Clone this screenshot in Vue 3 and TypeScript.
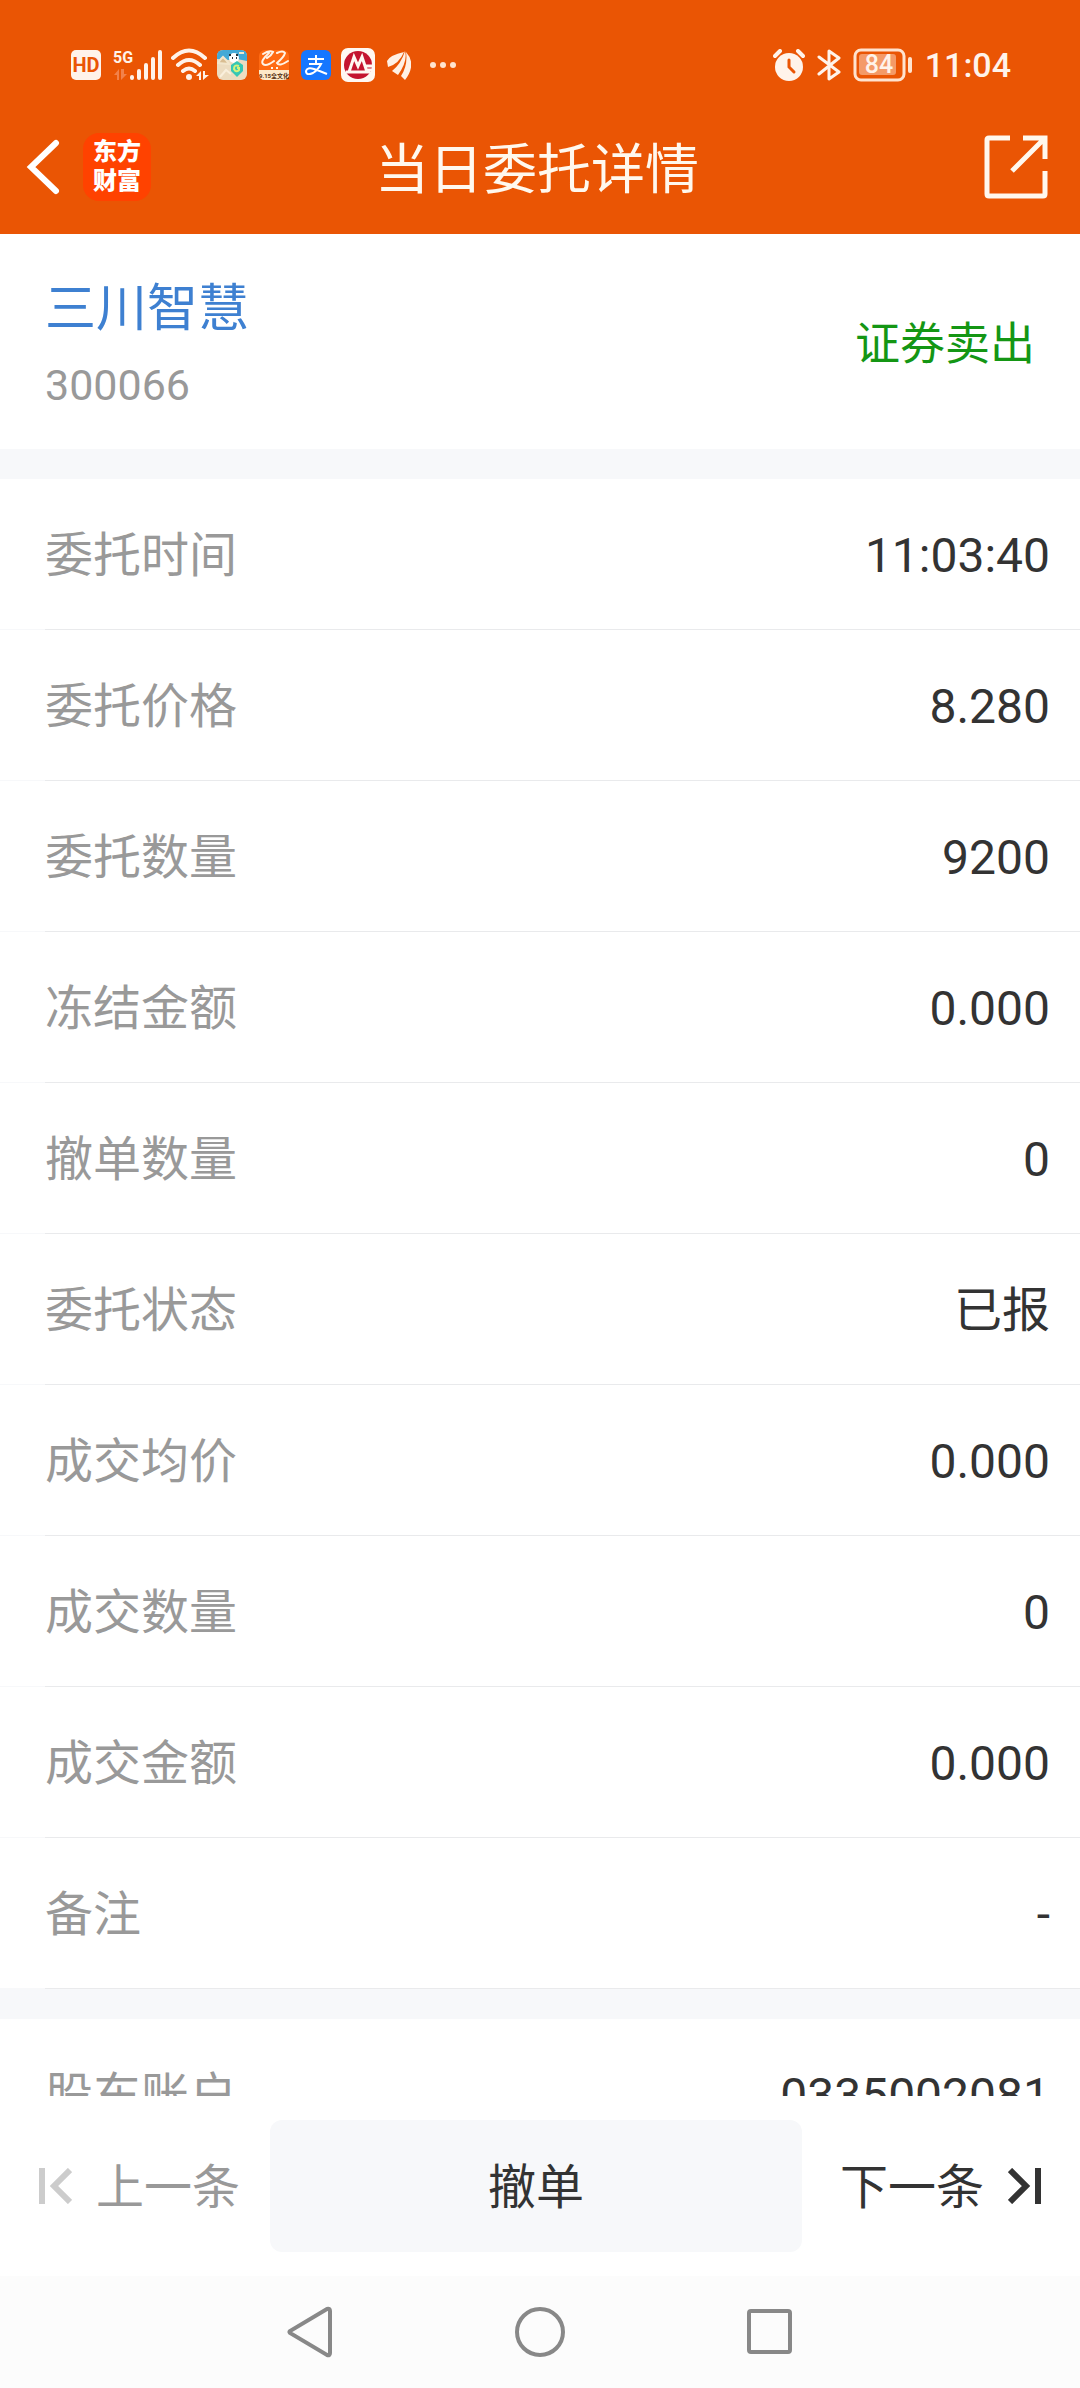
<script setup lang="ts">
interface Field {
  label: string
  value: string
}

const orderFields: Field[] = [
  { label: '委托时间', value: '11:03:40' },
  { label: '委托价格', value: '8.280' },
  { label: '委托数量', value: '9200' },
  { label: '冻结金额', value: '0.000' },
  { label: '撤单数量', value: '0' },
  { label: '委托状态', value: '已报' },
  { label: '成交均价', value: '0.000' },
  { label: '成交数量', value: '0' },
  { label: '成交金额', value: '0.000' },
  { label: '备注', value: '-' },
]

const accountFields: Field[] = [{ label: '股东账户', value: '0335002081' }]
</script>

<template>
  <div class="page">
    <header class="top">
      <div class="status">
        <div class="status-left">
          <svg width="30" height="30" viewBox="0 0 30 30">
            <rect width="30" height="30" rx="5" fill="#fff3ea" />
            <text x="15" y="22" text-anchor="middle" class="hd">HD</text>
          </svg>
          <svg class="signal" width="50" height="34" viewBox="0 0 50 34">
            <text x="0" y="15" class="net">5G</text>
            <path d="M1 27L6 21V32H4V27ZM8 21V32L14 26H11V21Z" fill="#f2814a" />
            <g stroke="#fff3ea" stroke-width="4" stroke-linecap="round">
              <path d="M19 29V30M26 23V30M33 17V30M40 11V30M47 4V30" />
            </g>
          </svg>
          <svg class="wifi" width="38" height="34" viewBox="0 0 38 34">
            <g fill="none" stroke="#fff3ea" stroke-width="4" stroke-linecap="round">
              <path d="M2 10Q18 -5 34 10M7 17Q18 7 29 17M12 23Q18 18 24 23" />
            </g>
            <circle cx="18" cy="29" r="3" fill="#fff3ea" />
            <path d="M25 28L30 23V32H28V28ZM32 23V32L38 27H34V23Z" fill="#fff3ea" />
          </svg>
          <svg width="30" height="30" viewBox="0 0 30 30">
            <rect width="30" height="30" rx="6" fill="#ecdcc0" />
            <path d="M0 9V6Q0 0 6 0H24Q30 0 30 6V11L20 9L12 10Z" fill="#43a9d6" />
            <path d="M1 13L4 9L6 7L9 10L12 14ZM22 3H27" stroke="#f2e6cc" stroke-width="2" fill="#d9bd91" />
            <circle cx="17" cy="8" r="5" fill="#fff" />
            <path d="M13 4V6M20 4V6M15 8H16M19 8H20" stroke="#28343c" stroke-width="2" />
            <path d="M20 11L26 15V21L20 27L14 21V15Z" fill="#35c7b4" />
            <path d="M22 16Q17 14 17 19Q19 23 22 20V18H20" fill="none" stroke="#d3f27c" stroke-width="2" />
            <path d="M3 27L9 20L14 24" fill="none" stroke="#f9efdc" stroke-width="2" />
          </svg>
          <svg width="30" height="30" viewBox="0 0 30 30">
            <rect width="30" height="30" rx="6" fill="#ff6a13" />
            <path d="M0 20H30V24Q30 30 24 30H6Q0 30 0 24Z" fill="#fde9c8" />
            <path d="M4 4Q10 0 14 2Q12 6 8 8M10 3Q1 11 4 14Q7 17 15 11M18 3Q24 0 26 3Q25 7 18 13Q20 17 29 11" fill="none" stroke="#fff3e6" stroke-width="2" stroke-linecap="round" />
            <path d="M12 18H14M17 18H19" stroke="#fff3e6" stroke-width="2" />
            <text x="15" y="28" text-anchor="middle" class="tiny">9.15全文化</text>
          </svg>
          <svg width="30" height="30" viewBox="0 0 30 30">
            <rect width="30" height="30" rx="6" fill="#1677ff" />
            <path d="M7 9H23M15 5V14M8 14H20Q17 20 12 23Q5 26 5 21Q6 17 13 19Q19 21 26 24" fill="none" stroke="#fff" stroke-width="2" />
          </svg>
          <svg class="bank" width="34" height="34" viewBox="0 0 34 34">
            <rect width="34" height="34" rx="7" fill="#fff8f2" />
            <circle cx="17" cy="17" r="14" fill="#c4142f" />
            <path d="M8 24L13 9L17 18L21 9L26 24M5 24H29M25 18H32M25 22H31" fill="none" stroke="#fff8f2" stroke-width="3" />
          </svg>
          <svg class="wing" width="24" height="30" viewBox="0 0 24 30">
            <path d="M0 11Q3 5 17 2Q12 14 1 17ZM5 21Q14 14 18 1Q21 11 11 25ZM14 26Q21 15 19 2Q30 14 18 30Z" fill="#fff0e4" />
          </svg>
          <svg class="more" width="26" height="6" viewBox="0 0 26 6">
            <g fill="#ffe3cf"><circle cx="3" cy="3" r="3" /><circle cx="13" cy="3" r="3" /><circle cx="23" cy="3" r="3" /></g>
          </svg>
        </div>
        <div class="status-right">
          <svg width="32" height="32" viewBox="0 0 32 32">
            <circle cx="16" cy="18" r="14" fill="#fff3ea" />
            <path d="M2 7L7 2M25 2L30 7" stroke="#fff3ea" stroke-width="4" stroke-linecap="round" />
            <path d="M16 11V18L21 23" fill="none" stroke="#ea5504" stroke-width="3" stroke-linecap="round" />
          </svg>
          <svg width="24" height="32" viewBox="0 0 24 32">
            <path d="M2 8L22 23L12 30V2L22 9L2 25" fill="none" stroke="#fff3ea" stroke-width="3" stroke-linecap="round" stroke-linejoin="round" />
          </svg>
          <svg width="60" height="34" viewBox="0 0 60 34">
            <rect x="2" y="2" width="49" height="30" rx="6" fill="none" stroke="#ffe3cf" stroke-width="3" />
            <rect x="6" y="6" width="37" height="21" rx="3" fill="#f49a68" />
            <path d="M57 11V23" stroke="#ffe3cf" stroke-width="4" stroke-linecap="round" />
            <text x="26" y="25" text-anchor="middle" class="charge">84</text>
          </svg>
          <time class="clock">11:04</time>
        </div>
      </div>

      <div class="title-bar">
        <div class="title-left">
          <button class="icon-button" type="button" aria-label="返回">
            <svg width="34" height="56" viewBox="0 0 34 56">
              <path d="M30 4L5 28L30 52" fill="none" stroke="#fff" stroke-width="6" stroke-linecap="round" />
            </svg>
          </button>
          <span class="brand">东方<br>财富</span>
        </div>
        <h1>当日委托详情</h1>
        <button class="icon-button share" type="button" aria-label="分享">
          <svg width="64" height="64" viewBox="0 0 64 64">
            <path d="M26 3H5Q3 3 3 5V59Q3 61 5 61H59Q61 61 61 59V36M39 3H61V24M61 3L28 36" fill="none" stroke="#fff8ee" stroke-width="5" />
          </svg>
        </button>
      </div>
    </header>

    <main class="content">
      <section class="summary">
        <div>
          <a class="stock" href="#">三川智慧</a>
          <div class="code">300066</div>
        </div>
        <div class="side">证券卖出</div>
      </section>

      <dl class="fields">
        <div v-for="field in orderFields" :key="field.label" class="row">
          <dt>{{ field.label }}</dt>
          <dd>{{ field.value }}</dd>
        </div>
      </dl>

      <dl class="fields">
        <div v-for="field in accountFields" :key="field.label" class="row">
          <dt>{{ field.label }}</dt>
          <dd>{{ field.value }}</dd>
        </div>
      </dl>
    </main>

    <footer class="actions">
      <button class="step previous" type="button">
        <svg width="33" height="36" viewBox="0 0 33 36">
          <path d="M3 0V36M31 2L15 18L31 34" fill="none" stroke="#ccc" stroke-width="6" />
        </svg>
        <span class="caption">上一条</span>
      </button>
      <button class="cancel" type="button"><span class="caption">撤单</span></button>
      <button class="step next" type="button">
        <span class="caption">下一条</span>
        <svg width="33" height="36" viewBox="0 0 33 36">
          <path d="M30 0V36M2 2L18 18L2 34" fill="none" stroke="#333" stroke-width="6" />
        </svg>
      </button>
    </footer>

    <nav class="system">
      <button type="button" aria-label="后退">
        <svg width="50" height="52" viewBox="0 0 50 52">
          <path d="M42 3L5 25Q4 26 5 27L42 49Q45 50 45 47V5Q45 2 42 3Z" fill="none" stroke="#888" stroke-width="4" />
        </svg>
      </button>
      <button type="button" aria-label="主页">
        <svg width="50" height="50" viewBox="0 0 50 50">
          <circle cx="25" cy="25" r="23" fill="none" stroke="#888" stroke-width="4" />
        </svg>
      </button>
      <button type="button" aria-label="最近任务">
        <svg width="46" height="46" viewBox="0 0 46 46">
          <rect x="2" y="2" width="41" height="41" rx="2" fill="none" stroke="#888" stroke-width="4" />
        </svg>
      </button>
    </nav>
  </div>
</template>

<style>
body {
  margin: 0;
}
</style>

<style scoped>
.page {
  display: flex;
  flex-direction: column;
  height: 100vh;
  background: #fff;
  color: #333;
  font-family: Roboto, "Noto Sans CJK SC", sans-serif;
  font-size: 48px;
  line-height: 72px;
}

svg {
  display: block;
  flex: none;
}

button {
  padding: 0;
  border: 0;
  background: none;
  color: inherit;
  font: inherit;
}

.top {
  flex: none;
  background: #ea5504;
  color: #fff8ee;
}

.status {
  display: flex;
  align-items: center;
  justify-content: space-between;
  height: 74px;
  padding: 28px 69px 0 71px;
}

.status-left,
.status-right {
  display: flex;
  align-items: center;
  gap: 12px;
}

.signal,
.wifi {
  margin-right: -4px;
}

.bank {
  margin-left: -2px;
}

.more {
  margin-left: 7px;
}

.hd {
  fill: #ea5504;
  font-size: 20px;
  font-weight: 700;
}

.net {
  fill: #fff3ea;
  font-size: 16px;
  font-weight: 700;
}

.tiny {
  fill: #5a3213;
  font-size: 6px;
  font-weight: 700;
}

.charge {
  fill: #fff3ea;
  font-size: 25px;
  font-weight: 500;
}

.clock {
  color: #fff3ea;
  font-size: 34px;
  font-weight: 500;
  line-height: 40px;
}

.title-bar {
  display: grid;
  grid-template-columns: 1fr auto 1fr;
  align-items: center;
  height: 130px;
  padding: 0 32px 2px 26px;
}

.title-left {
  display: flex;
  align-items: center;
  gap: 23px;
}

.share {
  justify-self: end;
}

.brand {
  width: 68px;
  box-sizing: border-box;
  padding: 5px 0;
  border-radius: 16px;
  background: #ff4200;
  color: #fff;
  font-size: 24px;
  font-weight: 900;
  line-height: 29px;
  text-align: center;
}

h1 {
  margin: 0;
  padding-top: 8px;
  font-size: 54px;
  font-weight: 400;
  line-height: 80px;
}

.content {
  flex: 1;
  min-height: 0;
  overflow-y: auto;
  scrollbar-width: none;
}

.summary {
  display: flex;
  align-items: center;
  justify-content: space-between;
  padding: 39px 45px 32px;
}

.stock {
  display: block;
  color: #3e80d1;
  font-size: 51px;
  line-height: 72px;
  text-decoration: none;
}

.code {
  margin-top: 8px;
  color: #999;
  font-size: 43px;
  line-height: 64px;
}

.side {
  color: #149614;
  font-size: 45px;
}

.fields {
  margin: 0;
  border-top: 30px solid #f7f8fa;
}

.row {
  display: flex;
  align-items: center;
  justify-content: space-between;
  height: 148px;
  padding: 3px 30px 0 45px;
  background: linear-gradient(90deg, #f7f8fa 45px, #e9eaec 45px) bottom / 100% 1px no-repeat;
}

dt {
  color: #999;
}

dd {
  margin: 0;
}

.actions {
  display: flex;
  flex: none;
  align-items: center;
  padding: 24px 39px;
}

.step {
  display: flex;
  align-items: center;
  gap: 24px;
  white-space: nowrap;
}

.caption {
  display: block;
  padding-top: 4px;
}

.previous {
  color: #999;
}

.cancel {
  flex: 1;
  height: 132px;
  margin: 0 38px 0 30px;
  border-radius: 12px;
  background: #f7f8fa;
}

.system {
  display: flex;
  flex: none;
  justify-content: center;
  height: 112px;
  background: #fcfcfc;
}

.system button {
  display: flex;
  align-items: center;
  justify-content: center;
  width: 230px;
}
</style>
